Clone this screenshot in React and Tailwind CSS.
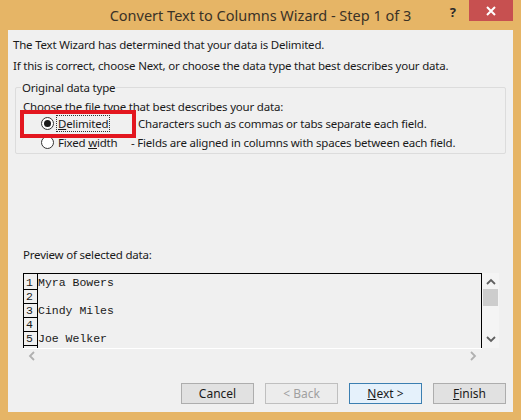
import React from 'react';

const ui = { fontFamily: '"Noto Sans", "Open Sans", sans-serif' };
const mono = { fontFamily: '"Liberation Mono", "Courier New", monospace' };

const rows = [
  { n: 1, text: 'Myra Bowers' },
  { n: 2, text: '' },
  { n: 3, text: 'Cindy Miles' },
  { n: 4, text: '' },
  { n: 5, text: 'Joe Welker' },
];

function Chevron({ dir, color = '#606060' }) {
  const paths = {
    up: 'M1 6 L5 2 L9 6',
    down: 'M1 2 L5 6 L9 2',
    left: 'M6 1 L2 5 L6 9',
    right: 'M2 1 L6 5 L2 9',
  };
  const vertical = dir === 'up' || dir === 'down';
  return (
    <svg width={vertical ? 10 : 8} height={vertical ? 8 : 10} viewBox={vertical ? '0 0 10 8' : '0 0 8 10'}>
      <path d={paths[dir]} fill="none" stroke={color} strokeWidth="1.8" />
    </svg>
  );
}

function Radio({ checked }) {
  return (
    <div className="w-[13px] h-[13px] rounded-full border border-[#333] bg-white flex items-center justify-center">
      {checked && <div className="w-[7px] h-[7px] rounded-full bg-[#1a1a1a]" />}
    </div>
  );
}

function Button({ children, variant }) {
  const styles = {
    normal: 'border-[#adadad] bg-[#e1e1e1] text-[#1a1a1a]',
    disabled: 'border-[#bfbfbf] bg-[#ececec] text-[#a0a0a0]',
    focus: 'border-[#3c7fb1] bg-[#e5f1fb] text-[#1a1a1a]',
  };
  return (
    <div className={`w-[73px] h-[21px] border flex items-center justify-center text-[12px] ${styles[variant]}`}>
      {children}
    </div>
  );
}

export default function App() {
  return (
    <div className="w-[521px] h-[420px] bg-[#e6b566] flex flex-col text-[#1a1a1a]" style={ui}>
      {/* title bar */}
      <div className="h-[30px] grid grid-cols-[1fr_auto_1fr]">
        <div />
        <div className="text-[14.5px] leading-[30px] text-[#3a3226]">Convert Text to Columns Wizard - Step 1 of 3</div>
        <div className="flex justify-end items-start pr-[8px]">
          <div className="mt-[3px] mr-[13px] text-[13px] font-bold text-[#2a2a2a]">?</div>
          <div className="w-[44px] h-[21px] bg-[#c75050] flex items-center justify-center">
            <svg width="10" height="10" viewBox="0 0 10 10">
              <path d="M1 1 L9 9 M9 1 L1 9" stroke="white" strokeWidth="2" />
            </svg>
          </div>
        </div>
      </div>

      {/* client area */}
      <div className="mx-[8px] h-[382px] bg-[#f0f0f0] relative text-[11.5px] tracking-[-0.2px] leading-[15px] pt-[7px]">
        <div className="pl-[5px]">The Text Wizard has determined that your data is Delimited.</div>
        <div className="pl-[5px] mt-[6px]">If this is correct, choose Next, or choose the data type that best describes your data.</div>

        <div className="mx-[7px] mt-[14px] border border-[#dcdcdc] rounded-[2px] pl-[7px] pb-[1px]">
          <div className="-mt-[8px] ml-[-2px] px-[1px] w-fit bg-[#f0f0f0]">Original data type</div>
          <div className="mt-[4px]">Choose the file type that best describes your data:</div>
          <div className="h-[19px] flex items-center">
            <div className="ml-[18px]"><Radio checked /></div>
            <div className="ml-[2px] w-[75px]">
              <span className="border border-dotted border-[#333] px-[1px]"><u>D</u>elimited</span>
            </div>
            <div className="pl-[7px]">Characters such as commas or tabs separate each field.</div>
          </div>
          <div className="h-[19px] flex items-center">
            <div className="ml-[18px]"><Radio /></div>
            <div className="ml-[4px] w-[73px]">Fixed <u>w</u>idth</div>
            <div>- Fields are aligned in columns with spaces between each field.</div>
          </div>
        </div>

        {/* red annotation box */}
        <div className="absolute left-[12px] top-[80px] w-[116px] h-[28px] border-[4px] border-[#e3161f]" />

        <div className="pl-[15px] mt-[93px]">Preview of selected data:</div>

        <div className="ml-[15px] mt-[11px] flex">
          <div className="w-[459px]">
            <div className="h-[75px] border-t border-x border-black flex tracking-normal" style={mono}>
              <div className="w-[14px] border-r border-black pt-[2px]">
                {rows.map((r) => (
                  <div key={r.n} className="h-[14px] border-b border-black text-[11.5px] leading-[13px] pl-[2px]">{r.n}</div>
                ))}
              </div>
              <div className="pt-[2px]">
                {rows.map((r) => (
                  <div key={r.n} className="h-[14px] text-[11.5px] leading-[14px]">{r.text}</div>
                ))}
              </div>
            </div>
            <div className="h-[14px] border-t border-white flex items-center justify-between px-[5px]">
              <Chevron dir="left" color="#b0b0b0" />
              <Chevron dir="right" color="#b0b0b0" />
            </div>
          </div>
          <div className="w-[17px] h-[75px] flex flex-col items-center bg-[#f4f4f4]">
            <div className="mt-[5px]"><Chevron dir="up" /></div>
            <div className="mt-[3px] w-[15px] h-[17px] bg-[#cdcdcd]" />
            <div className="mt-auto mb-[5px]"><Chevron dir="down" /></div>
          </div>
        </div>

        <div className="flex justify-end gap-[11px] pr-[7px] mt-[21px] tracking-normal">
          <Button variant="normal">Cancel</Button>
          <Button variant="disabled">&lt; Back</Button>
          <Button variant="focus"><span><u>N</u>ext &gt;</span></Button>
          <Button variant="normal"><span><u>F</u>inish</span></Button>
        </div>
      </div>
      <div className="h-[8px]" />
    </div>
  );
}
